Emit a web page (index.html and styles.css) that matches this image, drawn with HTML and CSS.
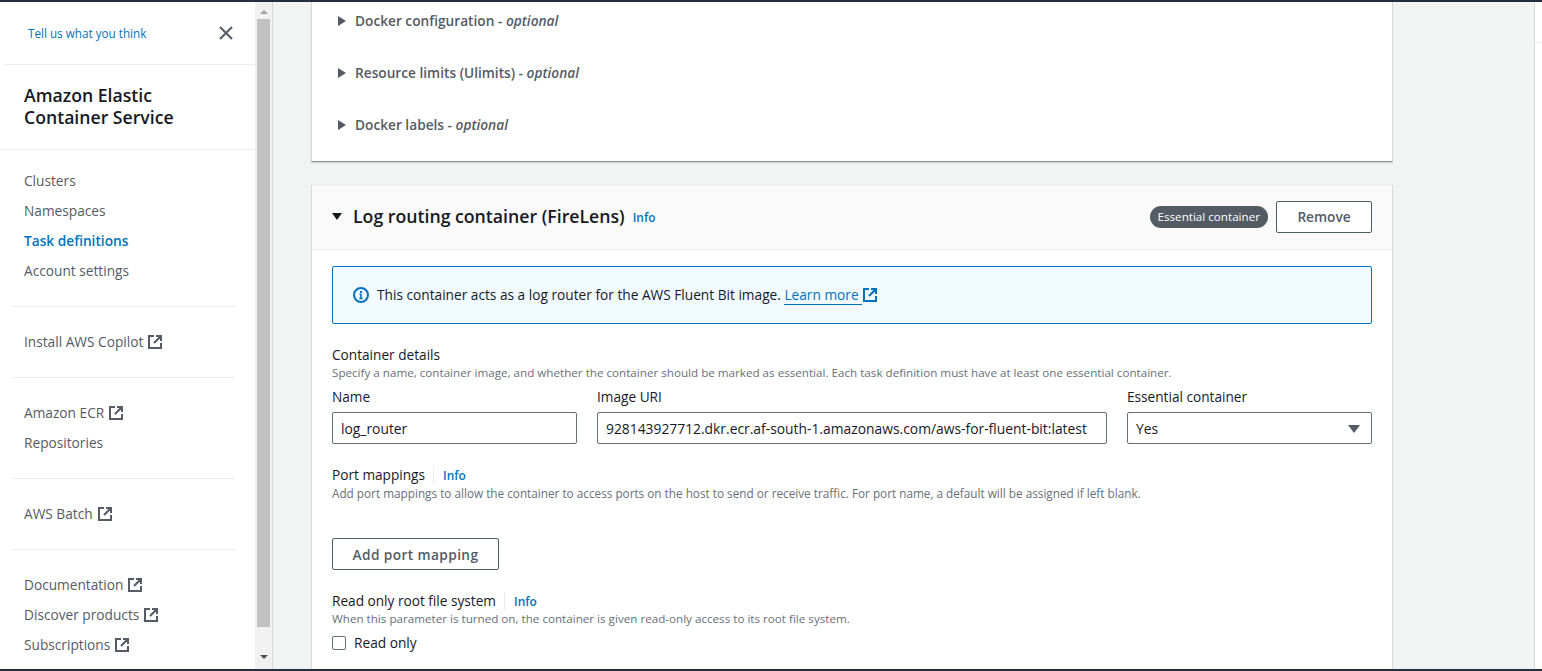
FILE: index.html
```html
<!DOCTYPE html>
<html lang="en">

<head>
  <meta charset="UTF-8">
  <title>Task definitions | Amazon Elastic Container Service</title>
  <link rel="stylesheet" href="styles.css">
</head>

<body>
  <svg class="defs" width="0" height="0">
    <symbol id="ext" viewBox="0 0 16 16">
      <path d="M7 2H2v12h12V9M9 2h5v5M14 2 7 9" fill="none" stroke="currentColor" stroke-width="2"/>
    </symbol>
  </svg>
  <div class="topbar"></div>
  <div class="app">
    <nav class="sidebar">
      <div class="feedback">
        <a class="feedback-link">Tell us what you think</a>
        <svg class="close" width="16" height="16" viewBox="0 0 16 16">
          <path d="M2 2l12 12M14 2 2 14" fill="none" stroke="currentColor" stroke-width="2"/>
        </svg>
      </div>
      <div class="service-title">Amazon Elastic<br>Container Service</div>
      <ul class="nav-group first">
        <li>Clusters</li>
        <li>Namespaces</li>
        <li class="active">Task definitions</li>
        <li>Account settings</li>
      </ul>
      <ul class="nav-group">
        <li>Install AWS Copilot<svg class="ext"><use href="#ext"/></svg></li>
      </ul>
      <ul class="nav-group">
        <li>Amazon ECR<svg class="ext"><use href="#ext"/></svg></li>
        <li>Repositories</li>
      </ul>
      <ul class="nav-group">
        <li>AWS Batch<svg class="ext"><use href="#ext"/></svg></li>
      </ul>
      <ul class="nav-group">
        <li>Documentation<svg class="ext"><use href="#ext"/></svg></li>
        <li>Discover products<svg class="ext"><use href="#ext"/></svg></li>
        <li>Subscriptions<svg class="ext"><use href="#ext"/></svg></li>
      </ul>
    </nav>
    <div class="scrollbar">
      <span class="arrow up"></span>
      <div class="thumb"></div>
      <span class="arrow down"></span>
    </div>

    <main class="content">
      <section class="card top-card">
        <div class="expander"><span class="caret"></span>Docker configuration - <em>optional</em></div>
        <div class="expander"><span class="caret"></span>Resource limits (Ulimits) - <em>optional</em></div>
        <div class="expander"><span class="caret"></span>Docker labels - <em>optional</em></div>
      </section>

      <section class="card router-card">
        <header class="card-header">
          <span class="caret-down"></span>
          <h2>Log routing container (FireLens)</h2>
          <a class="info head-info">Info</a>
          <span class="spacer"></span>
          <span class="badge">Essential container</span>
          <button class="btn remove">Remove</button>
        </header>

        <div class="card-body">
          <div class="alert">
            <svg class="alert-icon" width="16" height="16" viewBox="0 0 16 16">
              <circle cx="8" cy="8" r="7" fill="none" stroke="currentColor" stroke-width="2"/>
              <path d="M8 7v4.500M6.500 7.200H8M6.300 11.500h3.400" fill="none" stroke="currentColor" stroke-width="1.600"/>
              <rect x="7" y="4" width="2" height="2" fill="currentColor"/>
            </svg>
            <span>This container acts as a log router for the AWS Fluent Bit image. <a class="learn">Learn more</a></span>
            <svg class="ext ext-blue"><use href="#ext"/></svg>
          </div>

          <div class="label details-label">Container details</div>
          <div class="desc">Specify a name, container image, and whether the container should be marked as essential. Each task definition must have at least one essential container.</div>

          <div class="fields">
            <div class="field">
              <label class="label">Name</label>
              <div class="input">log_router</div>
            </div>
            <div class="field">
              <label class="label">Image URI</label>
              <div class="input">928143927712.dkr.ecr.af-south-1.amazonaws.com/aws-for-fluent-bit:latest</div>
            </div>
            <div class="field">
              <label class="label">Essential container</label>
              <div class="input select">Yes<span class="select-caret"></span></div>
            </div>
          </div>

          <div class="label ports-label">Port mappings<a class="info">Info</a></div>
          <div class="desc ports-desc">Add port mappings to allow the container to access ports on the host to send or receive traffic. For port name, a default will be assigned if left blank.</div>

          <button class="btn add-port">Add port mapping</button>

          <div class="label readonly-label">Read only root file system<a class="info">Info</a></div>
          <div class="desc">When this parameter is turned on, the container is given read-only access to its root file system.</div>
          <div class="check-row"><span class="checkbox"></span>Read only</div>
        </div>
      </section>
    </main>

    <aside class="right-rail">
      <div class="rail-top"></div>
    </aside>
  </div>
  <div class="bottombar"></div>
</body>

</html>
```

FILE: styles.css
```css
* {
  box-sizing: border-box;
  margin: 0;
  padding: 0;
}

html, body {
  height: 100%;
  overflow: hidden;
}

body {
  display: flex;
  flex-direction: column;
  font-family: "Open Sans", Arial, sans-serif;
  font-size: 13.700px;
  line-height: 20px;
  color: #16191f;
  background-color: #f2f3f3;
}

.defs {
  position: absolute;
}

.topbar, .bottombar {
  flex: none;
  height: 2px;
  background-color: #232f3e;
}

.app {
  flex: 1;
  display: flex;
  min-height: 0;
}

/* sidebar */
.sidebar {
  flex: none;
  width: 255px;
  background-color: #fff;
}

.feedback {
  display: flex;
  align-items: center;
  justify-content: space-between;
  height: 63px;
  margin-left: 4px;
  padding: 0 21px 0 24px;
  border-bottom: 1px solid #eaeded;
}

.feedback-link {
  font-size: 11.700px;
  color: #0073bb;
}

.close {
  color: #545b64;
}

.service-title {
  height: 85px;
  padding: 19px 24px 0;
  font-size: 17.650px;
  line-height: 22px;
  font-weight: 600;
  border-bottom: 1px solid #eaeded;
}

.nav-group {
  list-style: none;
  margin: 0 20px 0 12px;
  padding: 20px 12px;
  border-bottom: 1px solid #eaeded;
  color: #545b64;
}

.nav-group:last-child {
  border-bottom: none;
}

.nav-group.first {
  padding-top: 16px;
}

.nav-group li {
  display: flex;
  align-items: center;
  gap: 4px;
  height: 30px;
  white-space: pre;
}

.nav-group .active {
  color: #0073bb;
  font-weight: 600;
}

.ext {
  flex: none;
  width: 16px;
  height: 16px;
  color: #545b64;
}

/* scrollbar */
.scrollbar {
  flex: none;
  display: flex;
  flex-direction: column;
  align-items: center;
  width: 18px;
  padding-left: 2px;
  padding-right: 2px;
  background-color: #f1f1f1;
  border-right: 1px solid #d5dbdb;
}

.thumb {
  width: 13px;
  height: 608px;
  margin: 5px 0 0;
  background-color: #c1c1c1;
}

.arrow {
  width: 0;
  height: 0;
  border-left: 4px solid transparent;
  border-right: 4px solid transparent;
}

.arrow.up {
  margin-top: 8px;
  border-bottom: 4px solid #a3a3a3;
}

.arrow.down {
  margin-top: 28px;
  border-top: 4px solid #505050;
}

/* main column */
.content {
  flex: none;
  width: 1120px;
  padding: 0 0 0 38px;
  overflow: hidden;
}

.card {
  width: 1082px;
  background-color: #fff;
  border: 1px solid #d5dbdb;
  border-top: none;
}

.top-card {
  height: 160px;
  padding-top: 9px;
  padding-left: 26px;
  border-bottom: 1px solid #8d9596;
  box-shadow: 0 1px 1px rgba(0, 28, 36, 0.15);
}

.expander {
  display: flex;
  align-items: center;
  height: 20px;
  margin-bottom: 32px;
  font-weight: 600;
  color: #545b64;
  white-space: pre;
}

.expander em {
  font-style: italic;
}

.caret {
  width: 0;
  height: 0;
  margin-right: 9px;
  border-top: 5px solid transparent;
  border-bottom: 5px solid transparent;
  border-left: 8px solid #545b64;
}

.router-card {
  margin-top: 23px;
  border-top: 1px solid #eaeded;
}

.card-header {
  display: flex;
  align-items: center;
  height: 64px;
  padding: 0 20px 2px;
  background-color: #fafafa;
  border-bottom: 1px solid #eaeded;
}

.caret-down {
  width: 0;
  height: 0;
  margin-right: 11px;
  border-left: 5.500px solid transparent;
  border-right: 5.500px solid transparent;
  border-top: 7px solid #16191f;
}

h2 {
  margin-top: -2px;
  font-size: 17.700px;
  line-height: 24px;
  font-weight: 600;
}

.info {
  font-size: 11.900px;
  font-weight: 600;
  color: #0073bb;
}

.head-info {
  margin: 0 0 0 8px;
}

.spacer {
  flex: 1;
}

.badge {
  height: 22px;
  margin-right: 8px;
  padding: 0 8px;
  font-size: 11.650px;
  line-height: 21px;
  color: #fff;
  background-color: #545b64;
  border-radius: 11px;
}

.btn {
  font-family: inherit;
  font-size: 13.700px;
  font-weight: 600;
  color: #545b64;
  background-color: #fff;
  border: 1px solid #545b64;
  border-radius: 2px;
}

.remove {
  width: 96px;
  height: 32px;
}

.card-body {
  padding: 16px 20px 40px;
}

.alert {
  display: flex;
  align-items: center;
  height: 58px;
  padding-left: 20px;
  background-color: #f1faff;
  border: 1px solid #0073bb;
  border-radius: 2px;
}

.alert-icon {
  flex: none;
  margin-right: 8px;
  color: #0073bb;
}

.learn {
  padding-right: 3px;
  color: #0073bb;
  border-bottom: 1px solid #0073bb;
}

.ext-blue {
  margin-left: 0;
  color: #0073bb;
}

.label {
  font-size: 13.650px;
  line-height: 18px;
}

.details-label {
  margin-top: 22px;
}

.desc {
  font-size: 11.650px;
  line-height: 18px;
  color: #687078;
}

.ports-desc {
  font-size: 11.750px;
}

.fields {
  display: grid;
  grid-template-columns: 245px 510px 245px;
  gap: 20px;
  margin-top: 6px;
}

.field .label {
  display: block;
  height: 24px;
}

.input {
  height: 32px;
  padding: 1px 8px 0;
  font-size: 13.850px;
  line-height: 30px;
  white-space: nowrap;
  background-color: #fff;
  border: 1px solid #687078;
  border-radius: 2px;
}

.select {
  display: flex;
  align-items: center;
  justify-content: space-between;
}

.select-caret {
  width: 0;
  height: 0;
  margin-right: 3px;
  border-left: 6px solid transparent;
  border-right: 6px solid transparent;
  border-top: 8px solid #545b64;
}

.ports-label, .readonly-label {
  display: flex;
  align-items: center;
}

.ports-label {
  margin-top: 22px;
}

.ports-label .info, .readonly-label .info {
  margin-left: 8px;
  padding-left: 9px;
  border-left: 1px solid #eaeded;
}

.add-port {
  display: block;
  width: 167px;
  height: 32px;
  margin-top: 36px;
  letter-spacing: 0.400px;
}

.readonly-label {
  margin-top: 22px;
}

.check-row {
  display: flex;
  align-items: center;
  gap: 8px;
  margin-top: 5px;
}

.checkbox {
  width: 14px;
  height: 14px;
  background-color: #fff;
  border: 1px solid #687078;
  border-radius: 2px;
}

/* right side */
.right-rail {
  flex: 1;
  margin-left: 141px;
  background-color: #fff;
  border-left: 1px solid #d5dbdb;
}

.rail-top {
  height: 41px;
  border-bottom: 1px solid #eaeded;
}
```
